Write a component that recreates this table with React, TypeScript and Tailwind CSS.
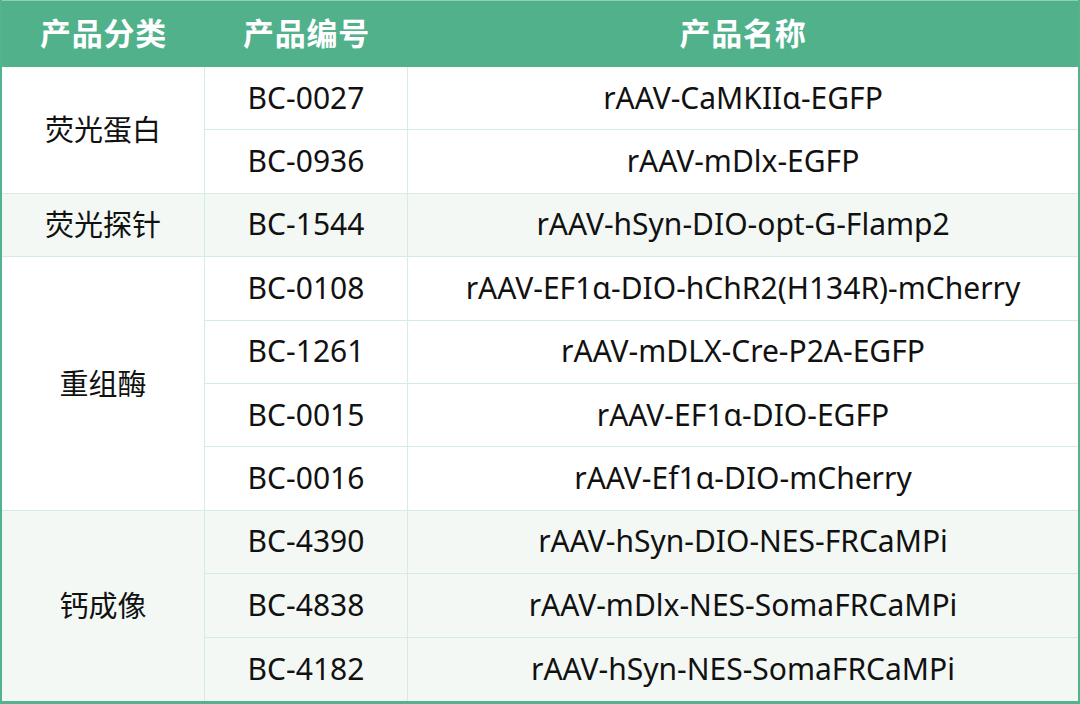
const groups = [
  {
    name: '荧光蛋白',
    shade: false,
    items: [
      ['BC-0027', 'rAAV-CaMKIIα-EGFP'],
      ['BC-0936', 'rAAV-mDlx-EGFP'],
    ],
  },
  {
    name: '荧光探针',
    shade: true,
    items: [['BC-1544', 'rAAV-hSyn-DIO-opt-G-Flamp2']],
  },
  {
    name: '重组酶',
    shade: false,
    items: [
      ['BC-0108', 'rAAV-EF1α-DIO-hChR2(H134R)-mCherry'],
      ['BC-1261', 'rAAV-mDLX-Cre-P2A-EGFP'],
      ['BC-0015', 'rAAV-EF1α-DIO-EGFP'],
      ['BC-0016', 'rAAV-Ef1α-DIO-mCherry'],
    ],
  },
  {
    name: '钙成像',
    shade: true,
    items: [
      ['BC-4390', 'rAAV-hSyn-DIO-NES-FRCaMPi'],
      ['BC-4838', 'rAAV-mDlx-NES-SomaFRCaMPi'],
      ['BC-4182', 'rAAV-hSyn-NES-SomaFRCaMPi'],
    ],
  },
];

const spans: Record<number, string> = {
  1: 'row-span-1',
  2: 'row-span-2',
  3: 'row-span-3',
  4: 'row-span-4',
};

export default function App() {
  return (
    <div
      className="w-[1080px] h-[704px] bg-white text-[#111] border-x-2 border-b-[3px] border-[#52b38d] grid grid-cols-[203px_203px_1fr] grid-rows-[67px_repeat(10,1fr)] grid-flow-dense"
      style={{ fontFamily: '"Noto Sans", "Noto Sans CJK SC", sans-serif' }}
    >
      {/* Header */}
      {['产品分类', '产品编号', '产品名称'].map((h) => (
        <div
          key={h}
          className="bg-[#50b18b] border-t border-[#8fd0b5] flex items-center justify-center text-white font-bold text-[31px] tracking-wide pb-0.5"
        >
          {h}
        </div>
      ))}

      {groups.map((g, gi) => {
        const bg = g.shade ? 'bg-[#f3f8f5]' : 'bg-white';
        const last = gi === groups.length - 1;
        return [
          <div
            key={g.name}
            className={`${spans[g.items.length]} col-start-1 ${bg} ${last ? '' : 'border-b'} border-r border-[#d6ece3] flex items-center justify-center text-[29px]`}
          >
            {g.name}
          </div>,
          ...g.items.map(([code, name], i) => {
            const end = last && i === g.items.length - 1;
            return [
              <div
                key={code}
                className={`col-start-2 ${bg} ${end ? '' : 'border-b'} border-r border-[#d6ece3] flex items-center justify-center text-[30px] pb-0.5`}
              >
                {code}
              </div>,
              <div
                key={code + 'n'}
                className={`col-start-3 ${bg} ${end ? '' : 'border-b'} border-[#d6ece3] flex items-center justify-center text-[30px] pb-0.5`}
              >
                {name}
              </div>,
            ];
          }),
        ];
      })}
    </div>
  );
}
